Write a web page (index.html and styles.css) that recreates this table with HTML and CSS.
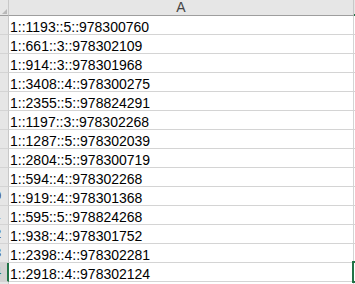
FILE: index.html
```html
<!DOCTYPE html>
<html>
<head>
<meta charset="utf-8">
<link rel="stylesheet" href="styles.css">
</head>
<body>
<div class="sheet">
  <div class="hdr corner"><svg width="8" height="15" viewBox="0 0 8 15"><polygon points="7,9 7,14 2,14" fill="#b8b8b8"/></svg></div>
  <div class="hdr colhdr">A</div>
  <div class="hdr colhdr colb"></div>

  <div class="rh"><span>1</span></div><div class="cell">1::1193::5::978300760</div><div class="cb"></div>
  <div class="rh"><span>2</span></div><div class="cell">1::661::3::978302109</div><div class="cb"></div>
  <div class="rh"><span>3</span></div><div class="cell">1::914::3::978301968</div><div class="cb"></div>
  <div class="rh"><span>4</span></div><div class="cell">1::3408::4::978300275</div><div class="cb"></div>
  <div class="rh"><span>5</span></div><div class="cell">1::2355::5::978824291</div><div class="cb"></div>
  <div class="rh"><span>6</span></div><div class="cell">1::1197::3::978302268</div><div class="cb"></div>
  <div class="rh"><span>7</span></div><div class="cell">1::1287::5::978302039</div><div class="cb"></div>
  <div class="rh"><span>8</span></div><div class="cell">1::2804::5::978300719</div><div class="cb"></div>
  <div class="rh"><span>9</span></div><div class="cell">1::594::4::978302268</div><div class="cb"></div>
  <div class="rh"><span>10</span></div><div class="cell">1::919::4::978301368</div><div class="cb"></div>
  <div class="rh"><span>11</span></div><div class="cell">1::595::5::978824268</div><div class="cb"></div>
  <div class="rh"><span>12</span></div><div class="cell">1::938::4::978301752</div><div class="cb"></div>
  <div class="rh"><span>13</span></div><div class="cell">1::2398::4::978302281</div><div class="cb"></div>
  <div class="rh sel"><span>14</span></div><div class="cell">1::2918::4::978302124</div><div class="cb"></div>
  <div class="rh"><span>15</span></div><div class="cell"></div><div class="cb"></div>

  <div class="selbox"></div>
</div>
</body>
</html>
```

FILE: styles.css
```css
html, body {
  margin: 0;
  padding: 0;
  background: #ffffff;
  overflow: hidden;
}
body {
  width: 355px;
  height: 284px;
}
.sheet {
  position: relative;
  display: grid;
  grid-template-columns: 9px 345px 1px;
  grid-auto-rows: 19px;
  grid-template-rows: 16px;
  font-family: "Liberation Sans", Arial, sans-serif;
  height: 284px;
  overflow: hidden;
}
.hdr {
  box-sizing: border-box;
  background: #e6e6e6;
  border-bottom: 1px solid #9e9e9e;
  height: 16px;
}
.corner {
  border-right: 1px solid #c8c8c8;
  line-height: 0;
}
.colhdr {
  border-right: 1px solid #c8c8c8;
  text-align: center;
  font-size: 14px;
  line-height: 15px;
  color: #444444;
}
.colb {
  border-right: none;
  border-bottom-color: #217346;
  border-bottom-width: 2px;
}
.rh {
  box-sizing: border-box;
  background: #e6e6e6;
  border-right: 1px solid #c8c8c8;
  border-bottom: 1px solid #d4d4d4;
  overflow: hidden;
  font-size: 13px;
  line-height: 18px;
  color: #444444;
}
.rh span {
  display: block;
  width: 28px;
  margin-left: -20px;
  text-align: center;
}
.rh.sel {
  background: #d2d2d2;
  border-right: 2px solid #217346;
  color: #217346;
}
.cell {
  box-sizing: border-box;
  border-right: 1px solid #d4d4d4;
  border-bottom: 1px solid #d4d4d4;
  padding: 4px 0 0 1px;
  font-size: 14px;
  line-height: 14px;
  color: #000000;
  white-space: nowrap;
  overflow: hidden;
}
.cb {
  box-sizing: border-box;
  border-bottom: 1px solid #d4d4d4;
}
.selbox {
  position: absolute;
  left: 352px;
  top: 261px;
  width: 8px;
  height: 22px;
  box-sizing: border-box;
  border: 2px solid #217346;
}
```
